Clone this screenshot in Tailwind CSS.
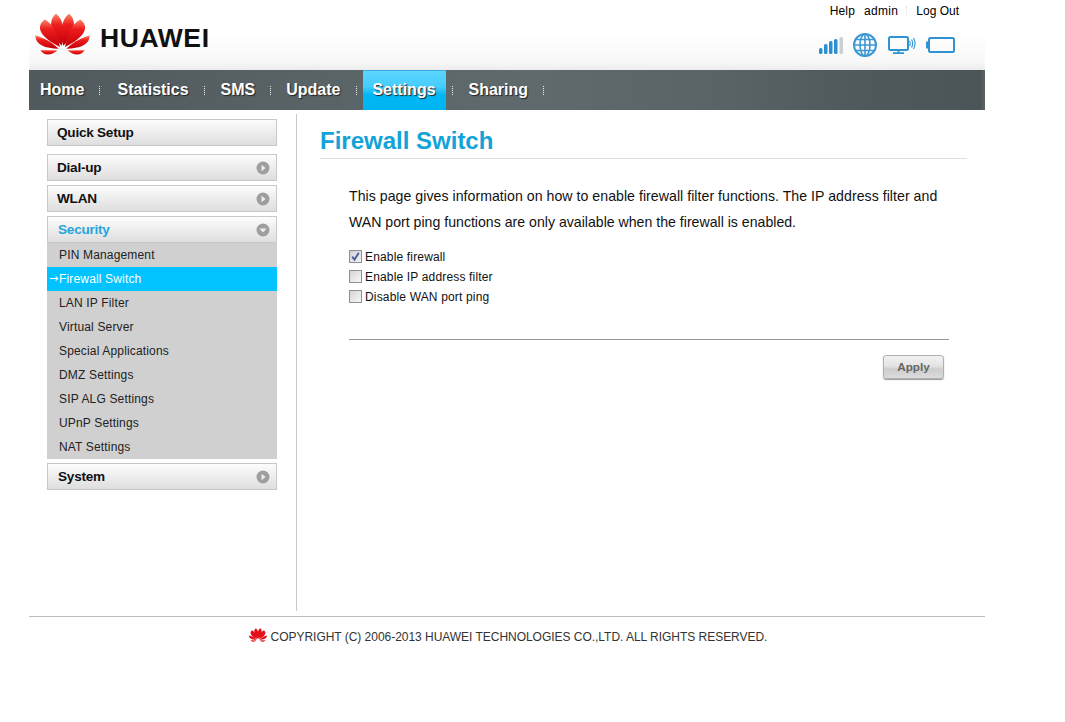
<!DOCTYPE html>
<html>
  <head>
    <title>Firewall Switch</title>
    <script src="https://cdn.jsdelivr.net/npm/@tailwindcss/browser@4"></script>
  </head>
  <body class="bg-white font-['Liberation_Sans',Arial,sans-serif] text-black">
    <div class="ml-[29px] w-[956px]">
      <!-- header -->
      <div class="flex h-[70px] justify-between bg-[linear-gradient(to_bottom,#ffffff_45%,#f8f8f8_88%,#ececec_100%)]">
        <div class="ml-[6px] mt-[13px] flex items-start">
          <svg width="55" height="42" viewBox="45 38 165 127">
            <defs>
              <linearGradient id="petal" x1="0" y1="0" x2="0" y2="1">
                <stop offset="0" stop-color="#f9866a" />
                <stop offset="0.35" stop-color="#ee1c1c" />
                <stop offset="1" stop-color="#c00008" />
              </linearGradient>
            </defs>
            <g fill="url(#petal)">
              <path d="M108 40 C84 58 88 100 125 137 C136 100 132 58 108 40Z" />
              <path d="M74 58 C46 78 56 110 120 141 C110 100 100 72 74 58Z" />
              <path d="M45 106 C46 135 75 145 116 146 C92 124 70 112 45 106Z" />
              <path d="M60 150 C72 168 92 168 113 151Z" />
              <path d="M147 40 C171 58 167 100 130 137 C119 100 123 58 147 40Z" />
              <path d="M181 58 C209 78 199 110 135 141 C145 100 155 72 181 58Z" />
              <path d="M210 106 C209 135 180 145 139 146 C163 124 185 112 210 106Z" />
              <path d="M195 150 C183 168 163 168 142 151Z" />
            </g>
          </svg>
          <span class="ml-[10px] mt-[9px] text-[26.5px] leading-[32px] font-bold tracking-[0.6px] text-[#111]">HUAWEI</span>
        </div>
        <div class="flex flex-col items-end pr-[25px]">
          <div class="mt-[4px] flex h-[14px] items-center text-[12px] leading-[14px] text-black">
            <span class="tracking-[0.2px]">Help</span>
            <span class="ml-[9px] tracking-[0.3px]">admin</span>
            <span class="ml-[8px] h-[10px] border-l border-dotted border-[#ddd]"></span>
            <span class="ml-[9px] mr-[1px]">Log Out</span>
          </div>
          <div class="mr-[5px] mt-[15px] flex items-start">
            <svg class="mt-[4px]" width="24" height="17" viewBox="0 0 24 17">
              <rect x="0" y="11" width="3.5" height="6" rx="1.5" fill="#2b8fd0" />
              <rect x="5" y="7" width="3.5" height="10" rx="1.5" fill="#2b8fd0" />
              <rect x="10" y="4" width="3.5" height="13" rx="1.5" fill="#2b8fd0" />
              <rect x="15" y="2" width="3.5" height="15" rx="1.5" fill="#2b8fd0" />
              <rect x="20.5" y="0" width="3.5" height="17" rx="1.5" fill="#c9cfd2" />
            </svg>
            <svg class="ml-[10px]" width="24" height="24" viewBox="0 0 24 24" fill="none" stroke="#3b97d3" stroke-width="1.6">
              <circle cx="12" cy="12" r="11" stroke-width="2" />
              <ellipse cx="12" cy="12" rx="5" ry="11" />
              <path d="M12 1V23M1 12H23M3 6.5H21M3 17.5H21" />
            </svg>
            <svg class="ml-[11px] mt-[3px]" width="28" height="18" viewBox="0 0 28 18" fill="none" stroke="#2f93d1">
              <rect x="1" y="1" width="19" height="13" rx="1.5" stroke-width="2" />
              <path d="M10.5 14V16.5M5 17.2H16" stroke-width="1.8" />
              <path d="M21.5 5Q23 7.5 21.5 10M23.5 3.5Q25.8 7.5 23.5 11.5M25.5 2Q28.6 7.5 25.5 13" stroke-width="1.1" />
            </svg>
            <svg class="ml-[10px] mt-[4px]" width="29" height="16" viewBox="0 0 29 16" fill="none">
              <rect x="0" y="4.5" width="3" height="7" fill="#2f93d1" />
              <rect x="3" y="1" width="25" height="14" rx="1.5" stroke="#2f93d1" stroke-width="2" />
            </svg>
          </div>
        </div>
      </div>

      <!-- main nav -->
      <div class="flex h-[40px] items-center bg-[linear-gradient(to_right,#50595b_0%,#5c6769_40%,#5f6a6c_53%,#596466_72%,#505a5c_86%,#4b5456_99.5%,#5a6365_100%)] text-[16px] font-bold text-white [text-shadow:1px_1px_1px_#222]">
        <span class="ml-[11px]">Home</span>
        <span class="ml-[15px] h-[9px] border-l border-dotted border-white/90"></span>
        <span class="ml-[17px]">Statistics</span>
        <span class="ml-[15px] h-[9px] border-l border-dotted border-white/90"></span>
        <span class="ml-[16px]">SMS</span>
        <span class="ml-[15px] h-[9px] border-l border-dotted border-white/90"></span>
        <span class="ml-[15px]">Update</span>
        <span class="ml-[15px] h-[9px] border-l border-dotted border-white/90"></span>
        <span class="ml-[6px] flex h-[40px] w-[83px] items-center justify-center border-t border-[#3aa8e0] bg-[linear-gradient(to_bottom,#5cd6ff_0%,#45cdfd_40%,#00b7f4_62%,#00b4f2_100%)] pb-[1px]">Settings</span>
        <span class="ml-[6px] h-[9px] border-l border-dotted border-white/90"></span>
        <span class="ml-[16px]">Sharing</span>
        <span class="ml-[15px] h-[9px] border-l border-dotted border-white/90"></span>
      </div>

      <!-- body -->
      <div class="flex">
        <div class="ml-[18px] flex w-[230px] flex-col pt-[9px] text-[13.6px] font-bold tracking-[-0.25px]">
          <div class="flex h-[27px] items-center border border-[#c8c8c8] bg-[linear-gradient(to_bottom,#fcfcfc,#dedede)] pl-[9px] pt-[1px] text-[#111]">Quick Setup</div>
          <div class="mt-[8px] flex h-[27px] items-center justify-between border border-[#c8c8c8] bg-[linear-gradient(to_bottom,#fcfcfc,#dedede)] pl-[9px] pr-[6px] text-[#111]">
            <span class="pt-[1px]">Dial-up</span>
            <svg width="14" height="14" viewBox="0 0 14 14"><circle cx="7" cy="7" r="6.5" fill="#9e9e9e" /><path d="M5.5 3.8L9.6 7L5.5 10.2Z" fill="#eee" /></svg>
          </div>
          <div class="mt-[4px] flex h-[27px] items-center justify-between border border-[#c8c8c8] bg-[linear-gradient(to_bottom,#fcfcfc,#dedede)] pl-[9px] pr-[6px] text-[#111]">
            <span class="pt-[1px]">WLAN</span>
            <svg width="14" height="14" viewBox="0 0 14 14"><circle cx="7" cy="7" r="6.5" fill="#9e9e9e" /><path d="M5.5 3.8L9.6 7L5.5 10.2Z" fill="#eee" /></svg>
          </div>
          <div class="mt-[4px] flex h-[27px] items-center justify-between border border-[#c8c8c8] bg-[linear-gradient(to_bottom,#fcfcfc,#dedede)] pl-[10px] pr-[6px] text-[#26a5dc]">
            <span class="pt-[1px]">Security</span>
            <svg width="14" height="14" viewBox="0 0 14 14"><circle cx="7" cy="7" r="6.5" fill="#9e9e9e" /><path d="M3.4 5.5L10.6 5.5L7 9.6Z" fill="#eee" /></svg>
          </div>
          <div class="flex flex-col bg-[#d0d0d0] text-[12px] font-normal tracking-[0.16px] text-[#222]">
            <div class="flex h-[24px] items-center pl-[12px]">PIN Management</div>
            <div class="flex h-[24px] items-center bg-[#00c3ff] pl-[2px] text-white"><span class="w-[10px] font-['DejaVu_Sans'] text-[11px]">→</span>Firewall Switch</div>
            <div class="flex h-[24px] items-center pl-[12px]">LAN IP Filter</div>
            <div class="flex h-[24px] items-center pl-[12px]">Virtual Server</div>
            <div class="flex h-[24px] items-center pl-[12px]">Special Applications</div>
            <div class="flex h-[24px] items-center pl-[12px]">DMZ Settings</div>
            <div class="flex h-[24px] items-center pl-[12px]">SIP ALG Settings</div>
            <div class="flex h-[24px] items-center pl-[12px]">UPnP Settings</div>
            <div class="flex h-[24px] items-center pl-[12px]">NAT Settings</div>
          </div>
          <div class="mt-[4px] flex h-[27px] items-center justify-between border border-[#c8c8c8] bg-[linear-gradient(to_bottom,#fcfcfc,#dedede)] pl-[10px] pr-[6px] text-[#111]">
            <span class="pt-[1px]">System</span>
            <svg width="14" height="14" viewBox="0 0 14 14"><circle cx="7" cy="7" r="6.5" fill="#9e9e9e" /><path d="M5.5 3.8L9.6 7L5.5 10.2Z" fill="#eee" /></svg>
          </div>
        </div>

        <div class="ml-[19px] mt-[4px] h-[497px] w-[689px] border-l border-[#c8c8c8] pl-[23px]">
          <div class="mr-[18px] h-[45px] border-b border-[#dddddd] pt-[13px] text-[24px] leading-[28px] font-bold text-[#12a3d8]">Firewall Switch</div>
          <div class="pl-[29px] pr-[36px]">
            <p class="mt-[24px] text-[14.13px] leading-[26px] text-[#111]"><span class="tracking-[0.04px]">This page gives information on how to enable firewall filter functions. The IP address filter and</span> WAN port ping functions are only available when the firewall is enabled.</p>
            <div class="mt-[12px] flex flex-col text-[12px] tracking-[0.16px] text-[#111]">
              <label class="flex h-[20px] items-center">
                <span class="mb-[2px] flex h-[13px] w-[13px] items-center justify-center border border-[#8e8f8f] bg-[linear-gradient(135deg,#cfcfd6,#f4f4f6)]">
                  <svg width="11" height="11" viewBox="0 0 11 11"><path d="M2.2 5.6L4.5 8.6L8.8 1.8" fill="none" stroke="#4a5a9c" stroke-width="1.8" /></svg>
                </span>
                <span class="ml-[3px]">Enable firewall</span>
              </label>
              <label class="flex h-[20px] items-center">
                <span class="mb-[2px] h-[13px] w-[13px] border border-[#8e8f8f] bg-[linear-gradient(135deg,#d4d4d4,#f8f8f8)]"></span>
                <span class="ml-[3px]">Enable IP address filter</span>
              </label>
              <label class="flex h-[20px] items-center">
                <span class="mb-[2px] h-[13px] w-[13px] border border-[#8e8f8f] bg-[linear-gradient(135deg,#d4d4d4,#f8f8f8)]"></span>
                <span class="ml-[3px]">Disable WAN port ping</span>
              </label>
            </div>
            <div class="mt-[32px] border-t border-[#999999]"></div>
            <div class="mt-[15px] flex justify-end pr-[5px]">
              <button class="h-[24px] w-[61px] rounded-[3px] border border-[#b0b0b0] bg-[linear-gradient(to_bottom,#f2f2f2_0%,#e4e4e4_45%,#cdcdcd_60%,#dcdcdc_100%)] text-[11.7px] font-bold text-[#666] shadow-[0_1px_1px_#999]">Apply</button>
            </div>
          </div>
        </div>
      </div>

      <!-- footer -->
      <div class="mt-[5px] flex h-[40px] items-center justify-center border-t border-[#bdbdbd] text-[12px] tracking-[-0.03px] text-[#333]">
        <svg class="mb-[3px] ml-[2px] mr-[4px]" width="18" height="14" viewBox="45 38 165 127">
          <g fill="#e3101a">
            <path d="M108 40 C84 58 88 100 125 137 C136 100 132 58 108 40Z" />
            <path d="M74 58 C46 78 56 110 120 141 C110 100 100 72 74 58Z" />
            <path d="M45 106 C46 135 75 145 116 146 C92 124 70 112 45 106Z" />
            <path d="M60 150 C72 168 92 168 113 151Z" />
            <path d="M147 40 C171 58 167 100 130 137 C119 100 123 58 147 40Z" />
            <path d="M181 58 C209 78 199 110 135 141 C145 100 155 72 181 58Z" />
            <path d="M210 106 C209 135 180 145 139 146 C163 124 185 112 210 106Z" />
            <path d="M195 150 C183 168 163 168 142 151Z" />
          </g>
        </svg>
        COPYRIGHT (C) 2006-2013 HUAWEI TECHNOLOGIES CO.,LTD. ALL RIGHTS RESERVED.
      </div>
    </div>
  </body>
</html>
